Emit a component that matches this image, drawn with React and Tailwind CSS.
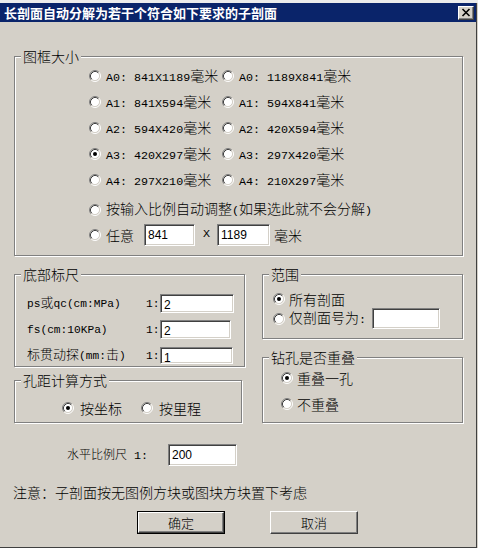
import React from 'react'

// ASCII runs get a half-width mono face, the rest stays in the CJK face
function Mix({ text, small }) {
  const parts = text.match(/[\x20-\x7e]+|[^\x20-\x7e]+/g) || []
  return parts.map((p, i) =>
    /^[\x20-\x7e]/.test(p) ? (
      <span
        key={i}
        className={small
          ? "font-['Liberation_Mono',monospace] text-[11.2px] whitespace-pre"
          : "font-['Liberation_Mono',monospace] text-[11.7px] whitespace-pre"}
      >
        {p}
      </span>
    ) : (
      <span key={i}>{p}</span>
    )
  )
}

function Radio({ checked }) {
  return (
    <svg width="12" height="12" viewBox="0 0 12 12" className="shrink-0">
      <circle cx="6" cy="6" r="4.5" fill="#fff" />
      <path d="M2.11 9.89A5.5 5.5 0 0 1 9.89 2.11" fill="none" stroke="#808080" />
      <path d="M9.89 2.11A5.5 5.5 0 0 1 2.11 9.89" fill="none" stroke="#fff" />
      <path d="M2.82 9.18A4.5 4.5 0 0 1 9.18 2.82" fill="none" stroke="#404040" />
      <path d="M9.18 2.82A4.5 4.5 0 0 1 2.82 9.18" fill="none" stroke="#d4d0c8" />
      {checked && <circle cx="6" cy="6" r="2" fill="#000" />}
    </svg>
  )
}

function Field({ value, className }) {
  return (
    <div className={`shrink-0 bg-white border border-t-[#808080] border-l-[#808080] border-r-white border-b-white shadow-[inset_1px_1px_0_#404040,inset_-1px_-1px_0_#d4d0c8] pl-[3px] pt-[4px] text-[12px] leading-none font-normal font-['Liberation_Sans',sans-serif] ${className}`}>
      {value}
    </div>
  )
}

function Group({ title, className, children }) {
  return (
    <div className={`relative border border-[#808080] shadow-[inset_1px_1px_0_#fff,1px_1px_0_#fff] ${className}`}>
      <span className="absolute -top-[8px] left-[6px] px-[2px] bg-[#d4d0c8] leading-none">{title}</span>
      {children}
    </div>
  )
}

function Button({ label, isDefault }) {
  const inner = (
    <div className="w-full h-full flex items-center justify-center border border-t-white border-l-white border-r-[#404040] border-b-[#404040] shadow-[inset_-1px_-1px_0_#808080] text-[13px]">
      {label}
    </div>
  )
  if (!isDefault) return <div className="w-[88px] h-[23px]">{inner}</div>
  return <div className="w-[88px] h-[23px] border border-black">{inner}</div>
}

const sizes = [
  ['A0: 841X1189毫米', 'A0: 1189X841毫米'],
  ['A1: 841X594毫米', 'A1: 594X841毫米'],
  ['A2: 594X420毫米', 'A2: 420X594毫米'],
  ['A3: 420X297毫米', 'A3: 297X420毫米'],
  ['A4: 297X210毫米', 'A4: 210X297毫米'],
]

const scales = [
  { label: 'ps或qc(cm:MPa)', value: '2', box: 'w-[74px] h-[19px]' },
  { label: 'fs(cm:10KPa)', value: '2', box: 'w-[71px] h-[19px]' },
  { label: '标贯动探(mm:击)', value: '1', box: 'w-[73px] h-[17px] pt-[3px]' },
]

export default function App() {
  return (
    <div className="w-[478px] h-[548px] bg-[#d4d0c8] overflow-hidden font-['Noto_Sans_CJK_SC',sans-serif] font-light text-[14px] leading-none text-black">
      <div className="h-[3px] bg-[#ececec]" />
      <div className="w-[477px] h-[545px] border-r border-b border-[#404040] flex flex-col">
        {/* title bar */}
        <div className="h-[19px] shrink-0 bg-[#0a246a] flex items-center justify-between pl-[4px] pr-[2px]">
          <span className="text-white font-bold text-[13px]">长剖面自动分解为若干个符合如下要求的子剖面</span>
          <div className="w-[16px] h-[14px] border border-t-white border-l-white border-r-[#404040] border-b-[#404040] bg-[#d4d0c8] shadow-[inset_-1px_-1px_0_#808080] flex items-center justify-center">
            <svg width="10" height="9" viewBox="0 0 10 9">
              <path d="M1.5 1l7 7M8.5 1l-7 7" stroke="#000" strokeWidth="1.6" fill="none" />
            </svg>
          </div>
        </div>

        {/* 图框大小 */}
        <Group title="图框大小" className="mt-[34px] ml-[14px] w-[449px] h-[200px] pt-[6px]">
          {sizes.map(([a, b], i) => (
            <div key={a} className="h-[26px] flex items-center pl-[74px]">
              <div className="w-[133px] flex items-center">
                <Radio checked={i === 3} />
                <span className="ml-[5px] whitespace-nowrap"><Mix text={a} /></span>
              </div>
              <Radio />
              <span className="ml-[5px] whitespace-nowrap"><Mix text={b} /></span>
            </div>
          ))}
          <div className="mt-[4px] h-[25px] flex items-center pl-[74px]">
            <Radio />
            <span className="ml-[5px] whitespace-nowrap"><Mix text="按输入比例自动调整(如果选此就不会分解)" /></span>
          </div>
          <div className="h-[25px] flex items-center pl-[74px]">
            <Radio />
            <span className="ml-[5px]">任意</span>
            <Field value="841" className="ml-[10px] w-[51px] h-[22px]" />
            <span className="ml-[8px] font-['Liberation_Mono',monospace] text-[11.7px]">X</span>
            <Field value="1189" className="ml-[7px] w-[53px] h-[22px]" />
            <span className="ml-[4px]">毫米</span>
          </div>
        </Group>

        <div className="mt-[18px] ml-[14px] flex items-start">
          <div className="flex flex-col">
            {/* 底部标尺 */}
            <Group title="底部标尺" className="w-[231px] h-[93px] pt-[18px] flex flex-col gap-[6px]">
              {scales.map(s => (
                <div key={s.label} className="h-[20px] flex items-center pl-[12px]">
                  <span className="w-[133px] text-[13px] whitespace-nowrap">
                    <span className="inline-block w-[119px]"><Mix text={s.label} small /></span>
                    <Mix text="1:" small />
                  </span>
                  <Field value={s.value} className={s.box} />
                </div>
              ))}
            </Group>

            {/* 孔距计算方式 */}
            <Group title="孔距计算方式" className="mt-[13px] w-[228px] h-[43px] pt-[17px]">
              <div className="h-[20px] flex items-center pl-[47px]">
                <Radio checked />
                <span className="ml-[6px]">按坐标</span>
                <span className="ml-[19px]"><Radio /></span>
                <span className="ml-[6px]">按里程</span>
              </div>
            </Group>
          </div>

          <div className="ml-[17px] flex flex-col">
            {/* 范围 */}
            <Group title="范围" className="w-[201px] h-[65px] pt-[15px]">
              <div className="h-[18px] flex items-center pl-[10px]">
                <Radio checked />
                <span className="ml-[4px]">所有剖面</span>
              </div>
              <div className="h-[21px] flex items-center pl-[10px]">
                <Radio />
                <span className="ml-[4px] whitespace-nowrap"><Mix text="仅剖面号为:" /></span>
                <Field value="" className="ml-[6px] w-[68px] h-[21px]" />
              </div>
            </Group>

            {/* 钻孔是否重叠 */}
            <Group title="钻孔是否重叠" className="mt-[18px] w-[201px] h-[66px] pt-[10px]">
              <div className="h-[20px] flex items-center pl-[18px]">
                <Radio checked />
                <span className="ml-[4px]">重叠一孔</span>
              </div>
              <div className="mt-[6px] h-[20px] flex items-center pl-[18px]">
                <Radio />
                <span className="ml-[4px]">不重叠</span>
              </div>
            </Group>
          </div>
        </div>

        {/* 水平比例尺 */}
        <div className="mt-[21px] ml-[67px] h-[22px] flex items-center">
          <span className="w-[101px] text-[12px] whitespace-nowrap">
            水平比例尺<span className="font-['Liberation_Mono',monospace] text-[11.7px] whitespace-pre"> 1:</span>
          </span>
          <Field value="200" className="w-[69px] h-[22px]" />
        </div>

        <div className="mt-[19px] ml-[13px]">注意：子剖面按无图例方块或图块方块置下考虑</div>

        <div className="mt-[12px] ml-[137px] flex gap-[45px]">
          <Button label="确定" isDefault />
          <Button label="取消" />
        </div>
      </div>
    </div>
  )
}
